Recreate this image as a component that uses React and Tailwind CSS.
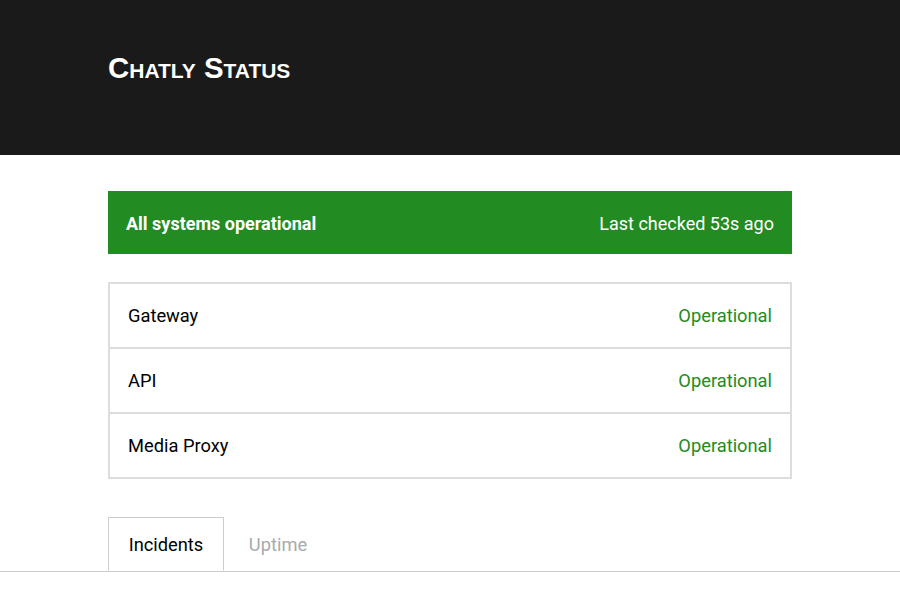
import React from "react";

const services = ["Gateway", "API", "Media Proxy"];

export default function App() {
  return (
    <div className="min-h-screen bg-white font-['Roboto',sans-serif]">
      {/* Header */}
      <div className="h-[155px] bg-[#1a1a1a]">
        <div className="mx-auto w-[684px] pt-[48px]">
          <h1 className="font-['Liberation_Sans',Arial,sans-serif] text-[29.4px] font-bold leading-[40px] text-white [font-variant:small-caps]">
            Chatly Status
          </h1>
        </div>
      </div>

      <div className="mx-auto w-[684px] pt-9">
        {/* Banner */}
        <div className="flex h-[63px] items-center justify-between bg-[#228b22] px-[18px] pt-[2px] text-[18px] text-white">
          <span className="font-bold">All systems operational</span>
          <span>Last checked 53s ago</span>
        </div>

        {/* Components */}
        <div className="mt-7 border-2 border-[#dddddd]">
          {services.map((name, i) => (
            <div
              key={name}
              className={
                "box-content flex h-[63px] items-center justify-between px-[18px] text-[18.3px] " +
                (i > 0 ? "border-t-2 border-[#dddddd]" : "")
              }
            >
              <span className="text-black">{name}</span>
              <span className="text-[#228b22]">Operational</span>
            </div>
          ))}
        </div>
      </div>

      {/* Tabs */}
      <div className="mt-[38px] border-b border-[#cccccc]">
        <div className="mx-auto flex w-[684px] text-[18.3px]">
          <div className="-mb-px flex h-[54px] w-[116px] items-center justify-center border border-b-white border-[#cccccc] bg-white pt-[2px] text-black">
            Incidents
          </div>
          <div className="flex h-[54px] w-[108px] items-center justify-center pt-[2px] text-[#aaaaaa]">
            Uptime
          </div>
        </div>
      </div>
    </div>
  );
}
